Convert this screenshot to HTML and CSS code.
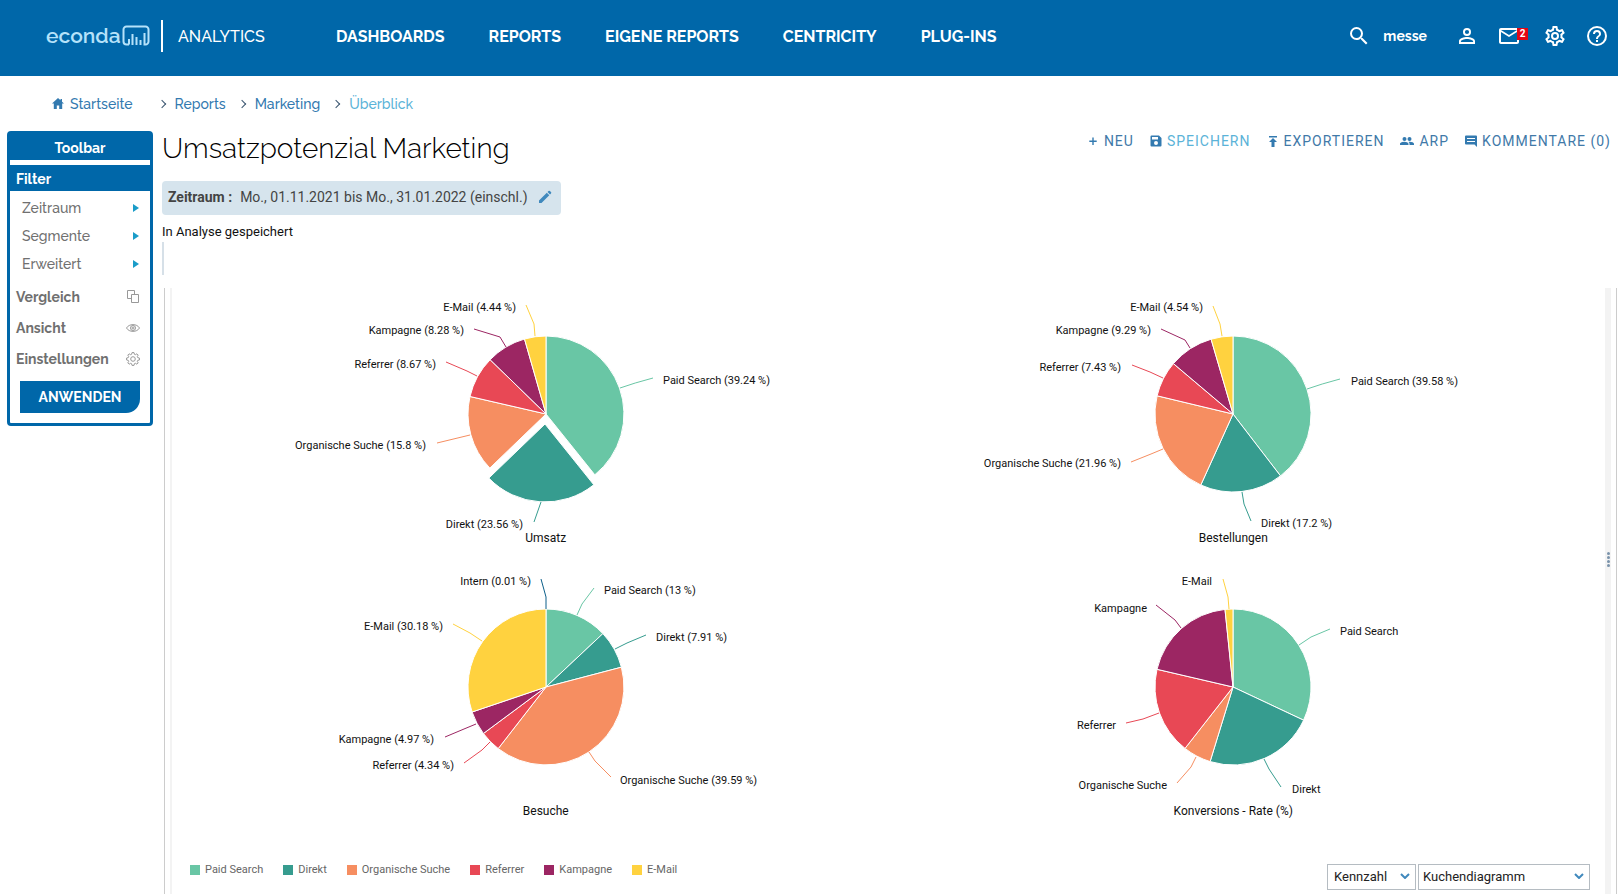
FILE: index.html
```html
<!DOCTYPE html>
<html lang="de">
<head>
<meta charset="utf-8">
<title>econda Analytics</title>
<link rel="stylesheet" href="styles.css">
</head>
<body>
<header class="topbar">
  <a class="brand" href="#">
    <span class="brand-name">econda</span>
    <svg class="brand-mark" width="28" height="22" viewBox="0 0 28 22"><path d="M7 19.500H4.500a3 3 0 0 1-3-3V4.500a3 3 0 0 1 3-3h19a3 3 0 0 1 3 3v12a3 3 0 0 1-3 3H22.500V8M7 14v5.500M10.500 9v11M14.500 12v8M18.500 15v5"/></svg>
  </a>
  <span class="product">ANALYTICS</span>
  <nav class="mainnav">
    <a href="#">DASHBOARDS</a>
    <a href="#">REPORTS</a>
    <a href="#">EIGENE REPORTS</a>
    <a href="#">CENTRICITY</a>
    <a href="#">PLUG-INS</a>
  </nav>
  <div class="usernav">
    <button class="icon-btn" aria-label="Suche"><svg width="24" height="24" viewBox="0 0 24 24"><path d="M15.500 14h-.79l-.28-.27A6.470 6.470 0 0 0 16 9.500 6.500 6.500 0 1 0 9.500 16c1.610 0 3.090-.59 4.230-1.570l.27.28v.79l5 4.990L20.490 19l-4.990-5zm-6 0C7.010 14 5 11.990 5 9.500S7.010 5 9.500 5 14 7.010 14 9.500 11.990 14 9.500 14z"/></svg></button>
    <a class="username" href="#">messe</a>
    <button class="icon-btn" aria-label="Profil"><svg width="24" height="24" viewBox="0 0 24 24"><path d="M12 5.900a2.100 2.100 0 1 1 0 4.200 2.100 2.100 0 0 1 0-4.200m0 9c2.970 0 6.100 1.460 6.100 2.100v1.100H5.900V17c0-.64 3.130-2.100 6.100-2.100M12 4a4 4 0 1 0 0 8 4 4 0 0 0 0-8zm0 9c-2.670 0-8 1.340-8 4v3h16v-3c0-2.660-5.330-4-8-4z"/></svg></button>
    <button class="icon-btn mail" aria-label="Nachrichten"><svg width="24" height="24" viewBox="0 0 24 24"><path d="M22 6c0-1.100-.9-2-2-2H4c-1.100 0-2 .9-2 2v12c0 1.100.9 2 2 2h16c1.100 0 2-.9 2-2V6zm-2 0l-8 5-8-5h16zm0 12H4V8l8 5 8-5v10z"/></svg><span class="badge">2</span></button>
    <button class="icon-btn" aria-label="Einstellungen"><svg width="24" height="24" viewBox="0 0 24 24"><path d="M19.430 12.980c.04-.32.07-.64.07-.98s-.03-.66-.07-.98l2.110-1.650c.19-.15.24-.42.12-.64l-2-3.460a.5.500 0 0 0-.61-.22l-2.490 1c-.52-.4-1.080-.73-1.690-.98l-.38-2.650A.49.490 0 0 0 14 2h-4c-.25 0-.46.180-.49.420l-.38 2.650c-.61.250-1.170.59-1.690.98l-2.490-1a.5.500 0 0 0-.61.220l-2 3.460c-.13.220-.07.490.12.640l2.110 1.650c-.04.320-.07.650-.07.980s.03.660.07.980l-2.110 1.650c-.19.150-.24.420-.12.640l2 3.460c.12.220.39.300.61.220l2.490-1c.52.400 1.080.730 1.690.980l.38 2.650c.03.240.24.420.49.420h4c.25 0 .46-.18.490-.42l.38-2.650c.61-.25 1.170-.59 1.690-.98l2.490 1c.23.090.49 0 .61-.22l2-3.460a.5.500 0 0 0-.12-.64l-2.110-1.650zm-1.980-1.710c.04.310.05.520.05.730s-.02.430-.05.730l-.14 1.130.89.700 1.080.840-.7 1.210-1.270-.51-1.040-.42-.9.680c-.43.320-.84.560-1.250.730l-1.060.430-.16 1.130-.2 1.350h-1.400l-.35-2.480-1.060-.43c-.43-.18-.83-.41-1.230-.71l-.91-.7-1.060.43-1.270.51-.7-1.210 1.970-1.540-.14-1.130c-.03-.31-.05-.54-.05-.74s.02-.43.050-.73l.14-1.130-1.970-1.540.7-1.210 2.310.94.900-.68c.43-.32.84-.56 1.250-.73l1.060-.43.360-2.480h1.390l.35 2.480 1.060.43c.43.180.83.410 1.230.71l.91.700 1.060-.43 1.270-.51.7 1.210-1.970 1.540.14 1.130zM12 8a4 4 0 1 0 0 8 4 4 0 0 0 0-8zm0 6a2 2 0 1 1 0-4 2 2 0 0 1 0 4z"/></svg></button>
    <button class="icon-btn" aria-label="Hilfe"><svg width="24" height="24" viewBox="0 0 24 24"><path d="M11 18h2v-2h-2v2zm1-16a10 10 0 1 0 0 20 10 10 0 0 0 0-20zm0 18a8 8 0 1 1 0-16 8 8 0 0 1 0 16zm0-14a4 4 0 0 0-4 4h2c0-1.100.9-2 2-2s2 .9 2 2c0 2-3 1.750-3 5h2c0-2.250 3-2.500 3-5a4 4 0 0 0-4-4z"/></svg></button>
  </div>
</header>

<nav class="crumbs" aria-label="Pfad">
  <a href="#" class="home"><svg width="12" height="11" viewBox="0 0 12 11"><path d="M6 0L0 5.500h1.800V11h3V7.500h2.400V11h3V5.500H12L10 3.700V1H8.500v1.300z"/></svg>Startseite</a>
  <a href="#">Reports</a>
  <a href="#">Marketing</a>
  <a href="#" class="current">Überblick</a>
</nav>

<div class="layout">
  <aside class="toolbar">
    <h2 class="toolbar-title">Toolbar</h2>
    <h3 class="toolbar-filter">Filter</h3>
    <ul class="filters">
      <li><button>Zeitraum<i class="arrow"></i></button></li>
      <li><button>Segmente<i class="arrow"></i></button></li>
      <li><button>Erweitert<i class="arrow"></i></button></li>
    </ul>
    <ul class="sections">
      <li><button>Vergleich<svg width="14" height="14" viewBox="0 0 14 14"><path d="M5 8.500H1.500v-8h7V5M5.500 4.500h7v8h-7z"/></svg></button></li>
      <li><button>Ansicht<svg width="14" height="14" viewBox="0 0 14 14"><path d="M.5 7C3 2.500 11 2.500 13.500 7 11 11.500 3 11.500.5 7z"/><circle cx="7" cy="7" r="2.500"/><circle cx="7" cy="7" r="1"/></svg></button></li>
      <li><button>Einstellungen<svg width="14" height="14" viewBox="0 0 14 14"><circle cx="7" cy="7" r="2.300"/><path d="M6 .6h2l.4 1.700 1 .4 1.500-.9 1.300 1.300-.9 1.500.4 1 1.700.4v2l-1.700.4-.4 1 .9 1.500-1.300 1.300-1.500-.9-1 .4-.4 1.700H6l-.4-1.700-1-.4-1.500.9-1.300-1.300.9-1.500-.4-1L.6 8V6l1.700-.4.4-1-.9-1.500 1.300-1.300 1.500.9 1-.4z"/></svg></button></li>
    </ul>
    <button class="apply">ANWENDEN</button>
  </aside>

  <main class="content">
    <div class="heading">
      <h1>Umsatzpotenzial Marketing</h1>
      <div class="actions">
        <button><svg width="12" height="12" viewBox="0 0 12 12"><path d="M5.300 2.500h1.400v3h3v1.400h-3v3H5.300v-3h-3V5.500h3z"/></svg>NEU</button>
        <button class="active"><svg width="12" height="12" viewBox="0 0 12 12"><path fill-rule="evenodd" d="M1.500.5h7.500L11.500 3v7.500a1 1 0 0 1-1 1h-9a1 1 0 0 1-1-1v-9a1 1 0 0 1 1-1zM2 2v2.500h6V2zm4 4a2 2 0 1 0 0 4 2 2 0 0 0 0-4z"/></svg>SPEICHERN</button>
        <button><svg width="12" height="12" viewBox="0 0 12 12"><path d="M2 1h8v1.500H2zM6 3l4 4H7.500v5h-3V7H2z"/></svg>EXPORTIEREN</button>
        <button><svg width="14" height="12" viewBox="0 0 14 12"><circle cx="4.500" cy="4" r="2"/><circle cx="9.500" cy="4" r="2"/><path d="M0 10V8.800C0 7.500 3 6.800 4.500 6.800S8.500 7.500 8.500 8.800V10zM9.500 10V8.800c0-.8-.4-1.400-1-1.800 2-.5 5.500.3 5.500 1.800V10z"/></svg>ARP</button>
        <button><svg width="12" height="12" viewBox="0 0 12 12"><path fill-rule="evenodd" d="M1 .5h10a1 1 0 0 1 1 1V12l-2.500-2.500H1a1 1 0 0 1-1-1v-7a1 1 0 0 1 1-1zM2 3v1h8V3zm0 3v1h8V6z"/></svg>KOMMENTARE (0)</button>
      </div>
    </div>
    <div class="period">
      <strong>Zeitraum :</strong>
      <span>Mo., 01.11.2021 bis Mo., 31.01.2022 (einschl.)</span>
      <button aria-label="Zeitraum bearbeiten"><svg width="14" height="14" viewBox="0 0 14 14"><path d="M1 10.500L8.800 2.700l2.500 2.500L3.500 13H1zM9.500 2l1-1a1 1 0 0 1 1.400 0l1.100 1.100a1 1 0 0 1 0 1.400l-1 1z"/></svg></button>
    </div>
    <p class="saved">In Analyse gespeichert</p>
    <div class="marker"></div>

    <section class="panel">
      <div class="report">
        <div class="charts">
          <figure>
            <svg class="pie" width="520" height="240" viewBox="-260 -126 520 240">
              <g class="slices">
                <path class="paid" d="M0 0L0-78A78 78 0 0 1 48.800 60.800Z"/>
                <path class="direct" transform="translate(-1 10)" d="M0 0L48.800 60.800A78 78 0 0 1-56.200 54.100Z"/>
                <path class="organic" d="M0 0L-56.200 54.100A78 78 0 0 1-76-17.500Z"/>
                <path class="referrer" d="M0 0L-76-17.500A78 78 0 0 1-55.900-54.300Z"/>
                <path class="campaign" d="M0 0L-55.900-54.300A78 78 0 0 1-21.500-75Z"/>
                <path class="email" d="M0 0L-21.500-75A78 78 0 0 1 0-78Z"/>
              </g>
              <g class="leaders">
                <path class="paid" d="M74-26Q88-31 107-36"/>
                <path class="direct" d="M-5 88L-12 108"/>
                <path class="organic" d="M-76 21L-109 29"/>
                <path class="referrer" d="M-69-38L-79-43-100-52"/>
                <path class="campaign" d="M-40-67L-46-77-72-85"/>
                <path class="email" d="M-11-78L-12-90-20-109"/>
              </g>
              <text x="117" y="-30">Paid Search (39.24 %)</text>
              <g class="end">
                <text x="-23" y="114">Direkt (23.56 %)</text>
                <text x="-120" y="35">Organische Suche (15.8 %)</text>
                <text x="-110" y="-46">Referrer (8.67 %)</text>
                <text x="-82" y="-80">Kampagne (8.28 %)</text>
                <text x="-30" y="-103">E-Mail (4.44 %)</text>
              </g>
            </svg>
            <figcaption>Umsatz</figcaption>
          </figure>
          <figure>
            <svg class="pie" width="520" height="240" viewBox="-260 -126 520 240">
              <g class="slices">
                <path class="paid" d="M0 0L0-78A78 78 0 0 1 47.500 61.900Z"/>
                <path class="direct" d="M0 0L47.500 61.900A78 78 0 0 1-32.200 71Z"/>
                <path class="organic" d="M0 0L-32.200 71A78 78 0 0 1-75.900-18.200Z"/>
                <path class="referrer" d="M0 0L-75.900-18.200A78 78 0 0 1-59.600-50.400Z"/>
                <path class="campaign" d="M0 0L-59.600-50.400A78 78 0 0 1-21.900-74.800Z"/>
                <path class="email" d="M0 0L-21.900-74.800A78 78 0 0 1 0-78Z"/>
              </g>
              <g class="leaders">
                <path class="paid" d="M74-25Q88-30 107-35"/>
                <path class="direct" d="M9 78L11 90 18 107"/>
                <path class="organic" d="M-70 35L-82 40-102 48"/>
                <path class="referrer" d="M-70-36L-83-42-101-49"/>
                <path class="campaign" d="M-43-66L-48-74-72-85"/>
                <path class="email" d="M-11-78L-13-90-20-108"/>
              </g>
              <text x="118" y="-29">Paid Search (39.58 %)</text>
              <text x="28" y="113">Direkt (17.2 %)</text>
              <g class="end">
                <text x="-112" y="53">Organische Suche (21.96 %)</text>
                <text x="-112" y="-43">Referrer (7.43 %)</text>
                <text x="-82" y="-80">Kampagne (9.29 %)</text>
                <text x="-30" y="-103">E-Mail (4.54 %)</text>
              </g>
            </svg>
            <figcaption>Bestellungen</figcaption>
          </figure>
          <figure>
            <svg class="pie" width="520" height="240" viewBox="-260 -126 520 240">
              <g class="slices">
                <path class="paid" d="M0 0L0-78A78 78 0 0 1 56.900-53.400Z"/>
                <path class="direct" d="M0 0L56.900-53.400A78 78 0 0 1 75.400-19.800Z"/>
                <path class="organic" d="M0 0L75.400-19.800A78 78 0 0 1-47.800 61.600Z"/>
                <path class="referrer" d="M0 0L-47.800 61.600A78 78 0 0 1-62.600 46.500Z"/>
                <path class="campaign" d="M0 0L-62.600 46.500A78 78 0 0 1-73.900 25Z"/>
                <path class="email" d="M0 0L-73.900 25A78 78 0 0 1 0-78Z"/>
              </g>
              <g class="leaders">
                <path class="paid" d="M31-72L36-83 48-99"/>
                <path class="direct" d="M69-38L81-44 100-52"/>
                <path class="organic" d="M43 65L49 74 65 90"/>
                <path class="referrer" d="M-56 55L-64 63-82 76"/>
                <path class="campaign" d="M-70 37L-82 42-101 50"/>
                <path class="email" d="M-64-46L-76-54-93-63"/>
                <path class="intern" d="M0-78V-90L-5-108"/>
              </g>
              <text x="58" y="-93">Paid Search (13 %)</text>
              <text x="110" y="-46">Direkt (7.91 %)</text>
              <text x="74" y="97">Organische Suche (39.59 %)</text>
              <g class="end">
                <text x="-92" y="82">Referrer (4.34 %)</text>
                <text x="-112" y="56">Kampagne (4.97 %)</text>
                <text x="-103" y="-57">E-Mail (30.18 %)</text>
                <text x="-15" y="-102">Intern (0.01 %)</text>
              </g>
            </svg>
            <figcaption>Besuche</figcaption>
          </figure>
          <figure>
            <svg class="pie" width="520" height="240" viewBox="-260 -126 520 240">
              <g class="slices">
                <path class="paid" d="M0 0L0-78A78 78 0 0 1 70.600 33.200Z"/>
                <path class="direct" d="M0 0L70.600 33.200A78 78 0 0 1-22.900 74.600Z"/>
                <path class="organic" d="M0 0L-22.900 74.600A78 78 0 0 1-48 61.400Z"/>
                <path class="referrer" d="M0 0L-48 61.400A78 78 0 0 1-76-17.700Z"/>
                <path class="campaign" d="M0 0L-76-17.700A78 78 0 0 1-8-77.600Z"/>
                <path class="email" d="M0 0L-8-77.600A78 78 0 0 1 0-78Z"/>
              </g>
              <g class="leaders">
                <path class="paid" d="M66-42L78-50 97-58"/>
                <path class="direct" d="M31 72L36 82 48 100"/>
                <path class="organic" d="M-37 70L-42 80-56 96"/>
                <path class="referrer" d="M-74 26L-90 32-107 36"/>
                <path class="campaign" d="M-52-59L-58-67-77-82"/>
                <path class="email" d="M-4-78L-5-90-10-108"/>
              </g>
              <text x="107" y="-52">Paid Search</text>
              <text x="59" y="106">Direkt</text>
              <g class="end">
                <text x="-66" y="102">Organische Suche</text>
                <text x="-117" y="42">Referrer</text>
                <text x="-86" y="-75">Kampagne</text>
                <text x="-21" y="-102">E-Mail</text>
              </g>
            </svg>
            <figcaption>Konversions - Rate (%)</figcaption>
          </figure>
        </div>
        <div class="panel-foot">
          <ul class="legend">
            <li class="paid">Paid Search</li>
            <li class="direct">Direkt</li>
            <li class="organic">Organische Suche</li>
            <li class="referrer">Referrer</li>
            <li class="campaign">Kampagne</li>
            <li class="email">E-Mail</li>
          </ul>
          <div class="selects">
            <span class="select short"><select aria-label="Gruppierung"><option>Kennzahl</option></select><svg width="10" height="6" viewBox="0 0 10 6"><path d="M1 1l4 4 4-4"/></svg></span>
            <span class="select long"><select aria-label="Diagrammtyp"><option>Kuchendiagramm</option></select><svg width="10" height="6" viewBox="0 0 10 6"><path d="M1 1l4 4 4-4"/></svg></span>
          </div>
        </div>
      </div>
      <div class="splitter"><i></i><i></i><i></i><i></i></div>
    </section>
  </main>
</div>
</body>
</html>
```

FILE: styles.css
```css
:root {
  --blue: #0067a9;
  --link: #337ab0;
  --light: #5bb3d8;
  --head: Raleway, Lato, sans-serif;
  --text: Roboto, sans-serif;
}
* { box-sizing: border-box; }
body {
  margin: 0;
  min-height: 100vh;
  display: flex;
  flex-direction: column;
  background: #fff;
  color: #111;
  font-family: var(--text);
}
a { color: inherit; text-decoration: none; }
button {
  border: 0;
  padding: 0;
  background: none;
  color: inherit;
  font: inherit;
  cursor: pointer;
}
ul { list-style: none; margin: 0; padding: 0; }
svg { flex: none; display: block; }

.topbar {
  height: 76px;
  padding: 0 9px 4px 46px;
  display: flex;
  align-items: center;
  background: var(--blue);
  color: #fff;
  font-family: var(--head);
}
.brand {
  display: flex;
  align-items: center;
  gap: 3px;
  height: 32px;
  width: 117px;
  border-right: 2px solid #fff;
  color: #b5e2fa;
}
.brand-name { width: 73px; font-size: 21px; line-height: 24px; font-weight: 600; }
.brand-mark path { fill: none; stroke: currentColor; stroke-width: 2; }
.product { margin-left: 15px; width: 87px; font-size: 16px; font-weight: 500; white-space: nowrap; }
.mainnav { display: flex; gap: 44px; margin-left: 71px; font-size: 16px; font-weight: 700; white-space: nowrap; }
.usernav { display: flex; align-items: center; margin-left: auto; gap: 18px; }
.icon-btn { position: relative; display: block; }
.icon-btn svg { fill: #fff; }
.mail { margin-right: 4px; }
.username { margin: 0 10px 0 -6px; font-size: 14px; font-weight: 700; }
.badge {
  position: absolute;
  left: 20px;
  top: 4px;
  width: 11px;
  height: 12px;
  background: #e30613;
  font: 700 10px/12px var(--text);
  text-align: center;
}

.crumbs {
  display: flex;
  height: 55px;
  padding-left: 52px;
  align-items: center;
  gap: 12px;
  color: var(--link);
  font-family: var(--head);
  font-size: 14px;
  font-weight: 500;
}
.crumbs a { display: flex; align-items: center; }
.crumbs a + a::before {
  content: "";
  width: 5px;
  height: 5px;
  margin: 0 10px 0 1px;
  border: solid #38546e;
  border-width: 1px 1px 0 0;
  transform: rotate(45deg);
}
.home { gap: 6px; margin-right: 13px; }
.home svg { fill: var(--link); }
.crumbs .current { color: var(--light); }

.layout { flex: 1; display: flex; gap: 9px; padding: 0 1px 0 7px; align-items: stretch; }
.toolbar {
  align-self: flex-start;
  flex: none;
  width: 146px;
  padding-bottom: 10px;
  border: 3px solid var(--blue);
  border-radius: 4px;
  color: #707070;
  font-family: var(--head);
  font-size: 14px;
  font-weight: 500;
}
.toolbar-title, .toolbar-filter {
  margin: 0;
  height: 26px;
  background: var(--blue);
  color: #fff;
  font-size: 14px;
  line-height: 28px;
  font-weight: 700;
}
.toolbar-title { margin-bottom: 5px; text-align: center; }
.toolbar-filter { padding-left: 6px; }
.filters { padding-top: 3px; }
.toolbar li button { display: flex; align-items: center; justify-content: space-between; width: 100%; padding-right: 11px; }
.filters li button { height: 28px; padding-left: 12px; }
.sections li button { height: 31px; padding: 0 10px 0 6px; font-weight: 700; }
.sections { padding: 3px 0 4px; }
.sections svg { fill: none; stroke: #999; }
.arrow {
  border: solid transparent;
  border-width: 4px 0 4px 6px;
  border-left-color: #1a9cc8;
}
.apply {
  display: block;
  width: 120px;
  height: 32px;
  margin: 3px 0 0 10px;
  background: var(--blue);
  border-radius: 0 0 14px 0;
  color: #fff;
  font-weight: 700;
}

.content { flex: 1; min-width: 0; display: flex; flex-direction: column; align-items: flex-start; }
.heading { align-self: stretch; display: flex; justify-content: space-between; height: 50px; }
h1 { margin: 0; color: #000; font: 300 28px/36px var(--head); }
.actions { display: flex; gap: 16px; height: 20px; padding-right: 6px; color: #4179a8; font-size: 14px; letter-spacing: 1px; white-space: nowrap; }
.actions button { display: flex; align-items: center; gap: 5px; letter-spacing: inherit; }
.actions svg { fill: var(--link); }
.actions .active { color: var(--light); }
.period {
  display: flex;
  align-items: center;
  height: 34px;
  padding: 0 9px 2px 6px;
  background: #d6e4ed;
  border-radius: 4px;
  color: #444;
  font-size: 14px;
}
.period span { margin: 0 10px 0 8px; }
.period svg { fill: #4089bd; }
.saved { margin: 8px 0 1px; font-size: 13px; line-height: 18px; }
.marker { width: 2px; height: 33px; background: #d6e0e8; }

.panel {
  flex: 1;
  align-self: stretch;
  display: flex;
  margin: 13px 0 0 2px;
  padding: 0 5px;
  border: solid #ccc;
  border-width: 0 1px;
}
.report {
  flex: 1;
  display: flex;
  flex-direction: column;
  justify-content: space-between;
  padding-bottom: 4px;
  border-left: 2px solid #f3f3f3;
}
.charts { display: grid; grid-template-columns: 1fr 1fr; grid-auto-rows: 273px; padding: 0 28px 0 30px; }
figure { margin: 0; display: flex; flex-direction: column; align-items: center; }
figcaption { font-size: 12px; line-height: 20px; }
.pie { overflow: visible; }
.pie text { font-size: 11px; fill: #111; }
.end { text-anchor: end; }
.paid { --c: #69c6a5; }
.direct { --c: #369c8f; }
.organic { --c: #f68e61; }
.referrer { --c: #e84855; }
.campaign { --c: #9c2663; }
.email { --c: #ffd23f; }
.intern { --c: #0c5f8a; }
.slices path { fill: var(--c); stroke: #fff; stroke-linejoin: round; }
.leaders path { fill: none; stroke: var(--c); }

.panel-foot { display: flex; align-items: center; justify-content: space-between; padding: 0 15px 0 18px; }
.legend { display: flex; gap: 20px; padding-bottom: 13px; color: #666; font-size: 11px; line-height: 14px; }
.legend li { display: flex; align-items: center; gap: 5px; }
.legend li::before { content: ""; width: 10px; height: 10px; background: var(--c); }
.selects { display: flex; gap: 2px; }
.select { position: relative; }
.select svg { position: absolute; right: 6px; top: 9px; fill: none; stroke: #4089bd; stroke-width: 2; pointer-events: none; }
.short { width: 89px; }
.long { width: 172px; }
select {
  appearance: none;
  width: 100%;
  height: 26px;
  padding: 0 4px;
  border: 1px solid #b5bcc2;
  border-radius: 0;
  background: #fff;
  color: #222;
  font: 13px var(--text);
}
.short select { padding-left: 6px; }
.splitter {
  flex: none;
  width: 6px;
  display: flex;
  flex-direction: column;
  align-items: center;
  justify-content: center;
  gap: 1px;
  padding-bottom: 64px;
  background: #f3f3f3;
}
.splitter i { width: 3px; height: 3px; border-radius: 2px; background: #7a93ab; }
```
